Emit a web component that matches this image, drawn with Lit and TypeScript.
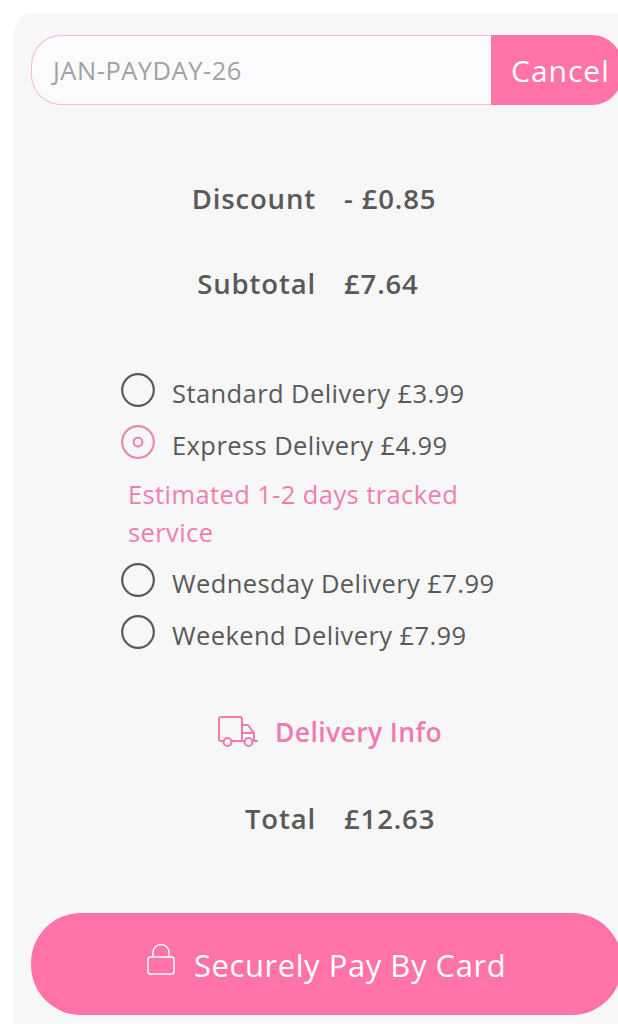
import { LitElement, html, svg, css } from "lit";
import { customElement } from "lit/decorators.js";

const options = [
  { label: "Standard Delivery £3.99", on: false },
  { label: "Express Delivery £4.99", on: true, note: "Estimated 1-2 days tracked service" },
  { label: "Wednesday Delivery £7.99", on: false },
  { label: "Weekend Delivery £7.99", on: false },
];

@customElement("app-root")
export class AppRoot extends LitElement {
  static styles = css`
    :host { display: block; width: 618px; height: 1024px; overflow: hidden; background: #fff;
      font-family: "Open Sans", sans-serif; color: #595959; }
    .card { box-sizing: border-box; width: 660px; height: 1011px; margin: 13px 0 0 14px; padding: 22px 0 0 17px;
      background: #f7f7f8; border-radius: 20px 0 0 0; }
    .promo { display: flex; width: 591px; height: 70px; }
    .code { box-sizing: border-box; width: 460px; border: 1.5px solid #f4bcd3; border-right: 0; border-radius: 30px 0 0 30px;
      background: #fbfafc; color: #a2a2a2; font-size: 25.5px; letter-spacing: 0.5px; padding-left: 21px; display: flex; align-items: center; }
    .cancel { flex: 1; background: #ff73a8; color: #fff; font-size: 30px; letter-spacing: 1px; border-radius: 0 30px 30px 0;
      padding-left: 20px; display: flex; align-items: center; }
    .line { display: grid; grid-template-columns: 285px 1fr; column-gap: 28px; font-size: 27.5px; font-weight: 600; line-height: 38px; letter-spacing: 0.85px; }
    .line .k { text-align: right; }
    .discount { margin-top: 75px; }
    .subtotal { margin-top: 47px; }
    .opts { margin: 64px 0 0 89px; width: 390px; display: flex; flex-direction: column; }
    .opt { display: flex; align-items: center; height: 52px; font-size: 25.5px; letter-spacing: 0.42px; gap: 16px; }
    .opt svg { flex: none; margin-top: -7px; }
    .note { color: #f27db0; font-size: 25.5px; letter-spacing: 0.4px; line-height: 38px; margin: 4px 0 0 8px; width: 345px; padding-bottom: 6px; }
    .info { display: flex; align-items: center; justify-content: flex-start; margin: 52px 0 0 187px; gap: 17px;
      color: #ee7bb0; font-size: 26.5px; font-weight: 600; line-height: 38px; letter-spacing: 0.38px; }
    .total { margin-top: 49px; }
    .pay { width: 591px; height: 102px; margin-top: 75px; background: #ff73a8; border-radius: 50px; color: #fff;
      font-size: 31px; letter-spacing: 0.55px; display: flex; align-items: center; justify-content: flex-start; padding-left: 116px; box-sizing: border-box; gap: 19px; }
    .pay span { margin-top: 1px; }
    .pay svg { margin-top: -10px; }
  `;

  render() {
    return html`<div class="card">
      <div class="promo"><div class="code">JAN-PAYDAY-26</div><div class="cancel">Cancel</div></div>
      <div class="line discount"><span class="k">Discount</span><span>- £0.85</span></div>
      <div class="line subtotal"><span class="k">Subtotal</span><span>£7.64</span></div>
      <div class="opts">
        ${options.map((o) => html`<div class="opt">
            <svg width="36" height="36" viewBox="0 0 36 36" fill="none" stroke=${o.on ? "#ea86b4" : "#595959"} stroke-width="2.2">
              <circle cx="18" cy="18" r="15.8"></circle>
              ${o.on ? svg`<circle cx="18" cy="18" r="4.4"></circle>` : ""}
            </svg>
            <span>${o.label}</span>
          </div>
          ${o.note ? html`<div class="note">${o.note}</div>` : ""}`)}
      </div>
      <div class="info">
        <svg width="40" height="32" viewBox="0 0 40 32" fill="none" stroke="#ee7bb0" stroke-width="2" stroke-linejoin="round" stroke-linecap="round">
          <path d="M6 25H3a2 2 0 0 1-2-2V3a2 2 0 0 1 2-2h19a2 2 0 0 1 2 2v22H13"></path>
          <path d="M24 9h6l6 8v8h-2M24 17h12M27 25h-3"></path>
          <circle cx="9.5" cy="26" r="4"></circle>
          <circle cx="30.5" cy="26" r="4"></circle>
          <path d="M36 25h3"></path>
        </svg>
        <span>Delivery Info</span>
      </div>
      <div class="line total"><span class="k">Total</span><span>£12.63</span></div>
      <div class="pay">
        <svg width="28" height="32" viewBox="0 0 28 32" fill="none" stroke="#fff" stroke-width="1.5" stroke-linejoin="round">
          <rect x="1" y="14" width="26" height="17" rx="2.5"></rect>
          <path d="M6 14V9.5a8 8 0 0 1 16 0V14"></path>
        </svg>
        <span>Securely Pay By Card</span>
      </div>
    </div>`;
  }
}
